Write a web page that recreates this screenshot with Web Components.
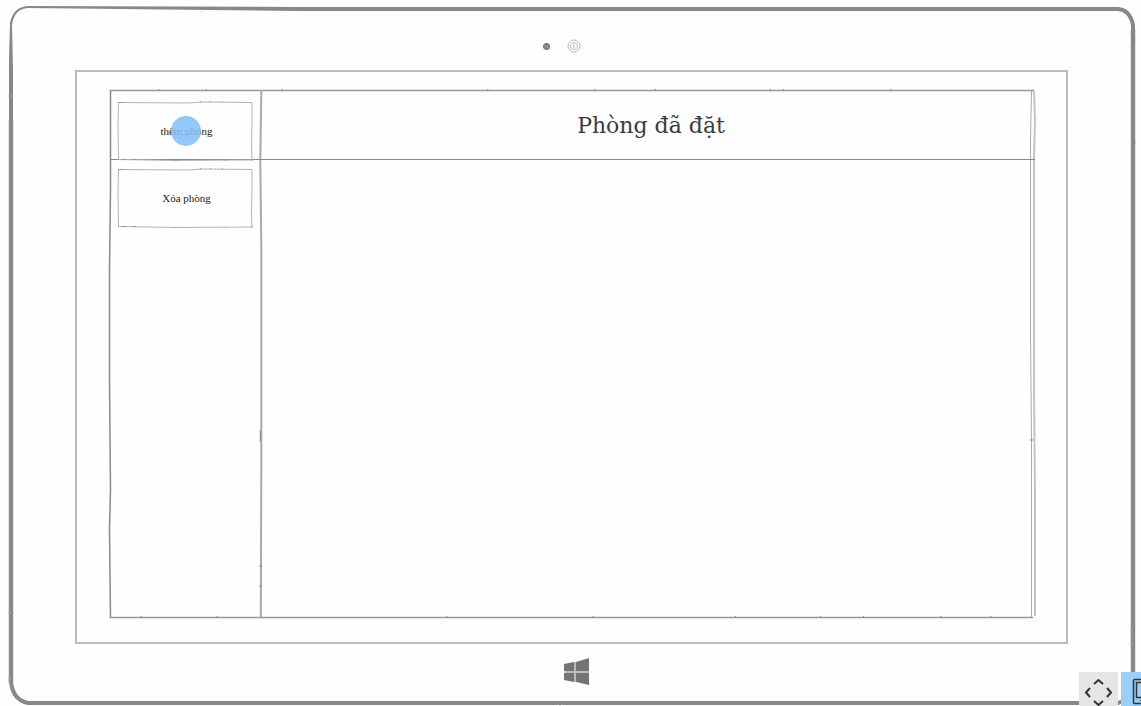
<!DOCTYPE html>
<html lang="vi">
<head>
<meta charset="utf-8">
<meta name="viewport" content="width=device-width">
<title>Phòng đã đặt</title>
<style>
body { margin: 0; background: #fefefe; font-family: "Liberation Serif", serif; color: #444; }
</style>
</head>
<body>
<room-app></room-app>
<script>
class BaseElement extends HTMLElement {
  constructor() {
    super();
    this.attachShadow({ mode: 'open' }).innerHTML = this.constructor.markup;
  }
}

// Hand-drawn tablet with camera, screen and home logo
customElements.define('tablet-frame', class extends BaseElement {
  static markup = `<style>
    :host { position: relative; display: flex; flex-direction: column; box-sizing: border-box; min-height: 100vh; padding: 0 73px 0 75px; }
    .outline { position: absolute; inset: 0; width: 100%; height: 100%; fill: none; stroke: #888; }
    .outline path { vector-effect: non-scaling-stroke; }
    .outline .solid { fill: #888; stroke: none; }
    .camera { display: flex; align-items: center; justify-content: center; gap: 16px; height: 70px; padding-top: 22px; padding-right: 20px; box-sizing: border-box; }
    .screen { flex: 1; display: flex; border: 2px solid #bbb; padding: 18px 31px 24px 32px; }
    .home { display: flex; justify-content: center; align-items: center; height: 62px; padding-bottom: 6px; padding-left: 10px; box-sizing: border-box; }
    svg { display: block; }
    .outline, .home, .camera { pointer-events: none; }
  </style>
  <svg class="outline" viewBox="0 0 1141 706" preserveAspectRatio="none" aria-hidden="true">
    <path stroke="#ccc" stroke-width="5" d="M11 120V682M1133 30V682"/>
    <path class="solid" d="M28 6L300 7V11L28 8Q14 9 12 25L13 70V200H9V60L10 23Q13 7 28 6Z"/>
    <path stroke-width="4" d="M298 9H1118Q1130 10 1133 25V680Q1132 698 1118 703H28Q13 700 11 682V198"/>
    <path stroke="#aaa" stroke-width="1" d="M8 96h3M8 613h3M8 678h3M8 682h3M1135 40h1M1135 142h1M1134 456h2M202 12v-1M560 706v-2M1130 630h3M1130 635h3M1130 644h3"/>
  </svg>
  <div class="camera">
    <svg width="9" height="9" viewBox="0 0 9 9" aria-hidden="true"><circle cx="4.500" cy="4.500" r="2.700" fill="#aaa" stroke="#777" stroke-width="1.700"/><path d="M4 6l1-3" stroke="#666"/></svg>
    <svg width="14" height="14" viewBox="0 0 14 14" fill="none" stroke="#bbb" aria-hidden="true"><circle cx="7" cy="7" r="6"/><circle cx="7" cy="7" r="3.500"/><path d="M7 5v4"/></svg>
  </div>
  <div class="screen"><slot></slot></div>
  <div class="home"><svg width="26" height="28" viewBox="0 0 26 28" fill="#747474" aria-hidden="true"><path fill="#bbb" d="M1 13H25V15H1ZM10 4H12V24H10Z"/><path d="M0 6L10 4V13H0ZM12 4L25 0V13H12ZM0 15H10V24L0 22ZM12 15H25V27L12 24Z"/></svg></div>`;
});

// Two-column window: sidebar through the "nav" slot, title through the default slot
customElements.define('sketch-window', class extends BaseElement {
  static markup = `<style>
    :host { flex: 1; position: relative; display: grid; grid-template-columns: 152px 1fr; grid-template-rows: 70px 1fr; }
    nav { grid-row: 1 / 3; display: flex; flex-direction: column; gap: 9px; padding: 12px 8px 0 9px; z-index: 1; }
    header { display: flex; align-items: center; justify-content: center; padding: 2px 0 0 6px; }
    .lines { position: absolute; inset: 0; width: 100%; height: 100%; overflow: visible; fill: none; stroke: #aaa; pointer-events: none; }
    .lines * { vector-effect: non-scaling-stroke; }
  </style>
  <svg class="lines" viewBox="0 0 924 528" preserveAspectRatio="none" aria-hidden="true">
    <path stroke="#999" stroke-width="1.500" d="M1 .500H923"/>
    <path stroke="#888" stroke-width="1.500" d="M1.500 0V100L.500 180V290L1.500 400L.500 440 1.500 528"/>
    <path stroke-width="2" d="M152 0L151 70 152 160V360L151.500 528"/>
    <path stroke="#999" stroke-width="1.500" d="M1 527.500H922"/>
    <path stroke="#c4c4c4" stroke-width="2" d="M923 1L924 30 923 70V300L924 400V526"/>
    <path stroke-width="1" d="M920.500 1L919.500 50V240L920.500 350V527"/>
    <path stroke="#888" stroke-width="1" d="M1 69.500H924"/>
    <path stroke="#888" stroke-width="1" d="M97 -1v2M173 -1v2M378 -1v2M485 -1v2M545 -1v2M660 -1v2M673 -1v2M780 -1v2M50 -1v2M32 526v2M108 526v2M337 526v2M483 526v2M625 526v2M710 526v2M753 526v2M830 526v2M880 526v2M919 350h3M151 340v12M150 496h3M150 476h3"/>
  </svg>
  <nav><slot name="nav"></slot></nav>
  <header><slot></slot></header>`;
});

customElements.define('page-title', class extends BaseElement {
  static markup = `<style>
    :host { display: block; }
    h1 { margin: 0; font: 400 22px/28px "DejaVu Serif", serif; color: #3c3c3c; }
  </style><h1><slot></slot></h1>`;
});

customElements.define('sketch-button', class extends BaseElement {
  static markup = `<style>
    :host { display: block; position: relative; }
    button { display: block; width: 100%; height: 58px; padding: 0 0 0 2px; border: 0; background: none; font: 11px/16px "Liberation Serif", serif; color: #222; cursor: pointer; }
    svg { position: absolute; inset: 0; width: 100%; height: 100%; fill: none; stroke: #b4b4b4; overflow: visible; pointer-events: none; }
  </style>
  <svg viewBox="0 0 135 58" preserveAspectRatio="none" aria-hidden="true">
    <path d="M0 .500L70 1 84 0 134 .500 134 20 133.500 44 134 58M.500 0L0 24 .500 57.500M0 57.500L30 58 56 58.500 134 58"/>
    <path stroke="#999" d="M0 .500H5M82 -.500h1M92 -.500h1M104 -.500h1M4 57.500h5M14 57.500h4M57 58.500h2M107 58.500h1M133 58h2"/>
  </svg>
  <button type="button"><slot></slot></button>
  <slot name="marker"></slot>`;
});

customElements.define('touch-marker', class extends BaseElement {
  static markup = `<style>
    :host { position: absolute; left: 50%; top: 50%; width: 30px; height: 30px; transform: translate(-50%, -50%); border-radius: 50%; background: #82bffadd; pointer-events: none; }
  </style>`;
});

// View controls docked in the window corner, partly cut by its edges
customElements.define('view-controls', class extends BaseElement {
  static markup = `<style>
    :host { position: fixed; right: 0; bottom: 0; display: flex; gap: 3px; width: 62px; height: 34px; overflow: hidden; }
    button { flex: none; width: 39px; height: 39px; padding: 0; border: 0; background: #e5e5e5; }
    button.active { background: #99d0fb; }
    svg { display: block; fill: none; stroke: #333; }
  </style>
  <button type="button" aria-label="Di chuyển"><svg width="39" height="39" viewBox="0 0 39 39" stroke-width="2"><path d="M15 12L19.500 8 24 12M11 16L7 20.500 11 25M28 16L32 20.500 28 25M15 29L19.500 33 24 29"/></svg></button>
  <button type="button" class="active" aria-label="Thiết bị"><svg width="39" height="39" viewBox="0 0 39 39"><rect x="12.500" y="7.500" width="16" height="24" rx="1" stroke-width="1.500"/><rect x="15.500" y="10.500" width="10" height="15" stroke-width="1.500"/><path d="M19 28.500h3"/></svg></button>`;
});

customElements.define('room-app', class extends BaseElement {
  static markup = `<style>:host { display: block; }</style>
  <tablet-frame>
    <sketch-window>
      <sketch-button slot="nav">thêm phòng<touch-marker slot="marker"></touch-marker></sketch-button>
      <sketch-button slot="nav">Xóa phòng</sketch-button>
      <page-title>Phòng đã đặt</page-title>
    </sketch-window>
  </tablet-frame>
  <view-controls></view-controls>`;
});
</script>
</body>
</html>
